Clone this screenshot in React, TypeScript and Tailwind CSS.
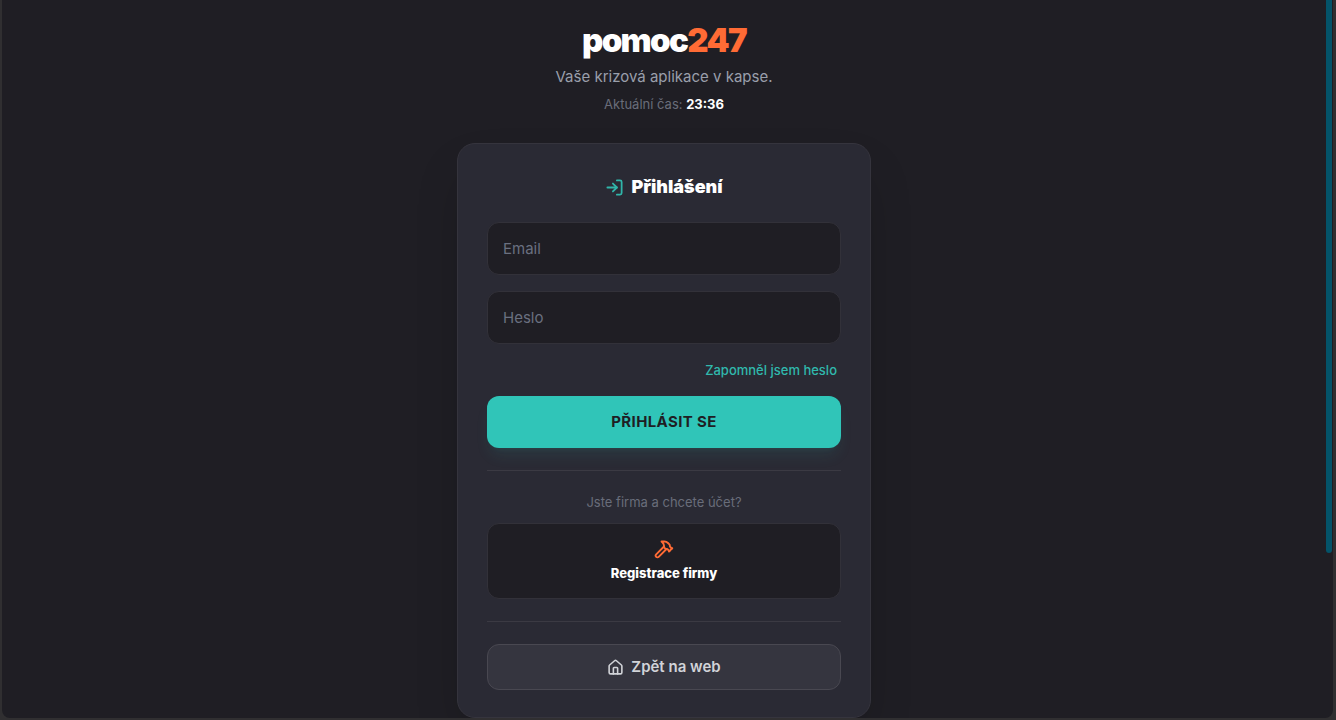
import { Hammer, House, LogIn } from "lucide-react";

const inputClass =
  "h-[53px] w-full rounded-xl border border-[#323139] bg-[#1f1e24] px-[15px] text-[15px] text-white outline-none placeholder:text-[#6a7080] focus:border-[#30c5b8]";

export default function App() {
  return (
    <div className="h-screen overflow-hidden bg-[#302f31] pr-[3px] pb-[2px] pl-[2px] font-['Inter',sans-serif]">
      <div className="flex h-full overflow-hidden rounded-b-lg bg-[#1f1e24]">
        <main className="flex min-w-0 flex-1 flex-col items-center pt-5">
          <header className="flex flex-col items-center">
            <h1 className="text-[33px] leading-10 font-black tracking-tighter text-white">
              pomoc<span className="text-[#ff6b35]">247</span>
            </h1>
            <p className="mt-[6px] text-[15px] leading-[22px] text-[#9a9fab]">Vaše krizová aplikace v kapse.</p>
            <p className="mt-[7px] text-[13px] leading-[18px] text-[#696d7a]">
              Aktuální čas: <time className="font-bold text-white">23:36</time>
            </p>
          </header>

          <section className="mt-[30px] w-full max-w-[414px] rounded-[18px] border border-[#35343d] bg-[#2a2a34] px-[29px] pt-[30px] pb-[27px] shadow-2xl">
            <h2 className="flex items-center justify-center gap-[7px] text-[18px] leading-[26px] font-black text-white">
              <LogIn className="size-[19px] text-[#30b5a9]" strokeWidth={2.25} aria-hidden="true" />
              Přihlášení
            </h2>

            <form className="mt-[22px] flex flex-col" onSubmit={(e) => e.preventDefault()}>
              <input className={inputClass} type="email" placeholder="Email" aria-label="Email" />
              <input className={inputClass + " mt-4"} type="password" placeholder="Heslo" aria-label="Heslo" />
              <a href="#heslo" className="mt-4 mr-1 self-end text-[13px] leading-5 font-medium text-[#30b9ad]">
                Zapomněl jsem heslo
              </a>
              <button
                type="submit"
                className="mt-4 h-[52px] rounded-xl bg-[#30c5b8] text-[15px] font-bold tracking-wide text-[#1f1e24] shadow-lg shadow-[#30c5b8]/10"
              >
                PŘIHLÁSIT SE
              </button>
            </form>

            <div className="mt-[22px] border-t border-[#3b3a43] pt-[21px] text-center">
              <p className="text-[13px] leading-5 text-[#696d7a]">Jste firma a chcete účet?</p>
              <button
                type="button"
                className="mt-[11px] flex h-[76px] w-full flex-col items-center justify-center gap-1 rounded-xl border border-[#323139] bg-[#1f1e24] text-[13px] leading-5 font-extrabold text-white"
              >
                <Hammer className="size-5 text-[#ff6b35]" strokeWidth={2.25} aria-hidden="true" />
                Registrace firmy
              </button>
            </div>

            <div className="mt-[22px] border-t border-[#3b3a43] pt-[22px]">
              <a
                href="#web"
                className="flex h-[46px] items-center justify-center gap-[7px] rounded-xl border border-[#494851] bg-[#35353f] text-[15px] font-semibold text-[#d1d3d8]"
              >
                <House className="size-[17px]" strokeWidth={2.25} aria-hidden="true" />
                Zpět na web
              </a>
            </div>
          </section>
        </main>
        <div className="w-[7px] shrink-0" aria-hidden="true">
          <div className="h-[77%] w-[6px] rounded-b-full bg-[#045369]" />
        </div>
      </div>
    </div>
  );
}
